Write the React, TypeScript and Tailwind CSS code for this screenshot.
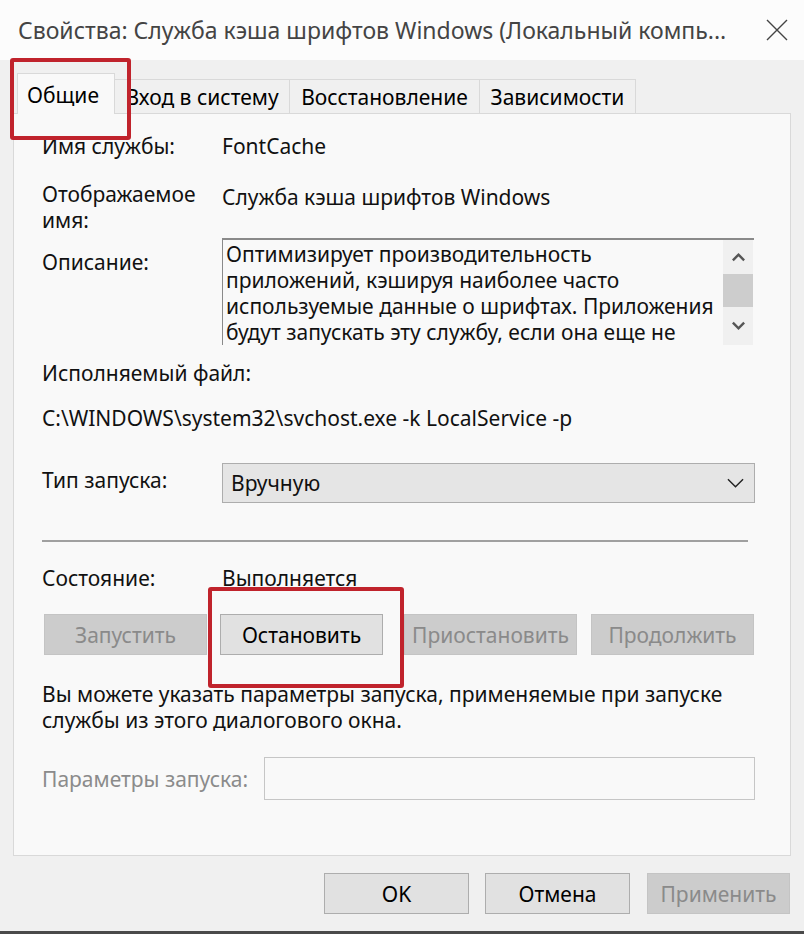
import React from 'react';

const FONT = { fontFamily: '"Noto Sans", "Open Sans", sans-serif' };

function Chevron({ up, className }: { up?: boolean; className?: string }) {
  return (
    <svg viewBox="0 0 16 10" className={className} fill="none" stroke="currentColor" strokeWidth={2.6}>
      {up ? <path d="M2 8.5 L8 2.5 L14 8.5" /> : <path d="M2 1.5 L8 7.5 L14 1.5" />}
    </svg>
  );
}

function Tab({ label, active, w }: { label: string; active?: boolean; w: string }) {
  if (active) {
    return (
      <div className={`${w} h-[41px] -mb-px relative z-10 bg-[#f9f9f9] border border-b-0 border-[#d9d9d9] flex items-start pt-[8px] pl-[9px] text-black`}>
        {label}
      </div>
    );
  }
  return (
    <div className={`${w} h-[34px] bg-[#f0f0f0] border border-b-0 border-l-0 border-[#d9d9d9] flex items-center justify-center text-black whitespace-nowrap`}>
      {label}
    </div>
  );
}

function Btn({ label, w, disabled }: { label: string; w: string; disabled?: boolean }) {
  return (
    <div
      className={`${w} h-[41px] flex items-center justify-center border whitespace-nowrap ${
        disabled ? 'bg-[#cccccc] border-[#c4c4c4] text-[#8a8a8a]' : 'bg-[#e1e1e1] border-[#adadad] text-black'
      }`}
    >
      {label}
    </div>
  );
}

export default function App() {
  return (
    <div className="w-[804px] h-[934px] bg-[#f0f0f0] relative overflow-hidden text-[21px] leading-[26px] text-[#111]" style={FONT}>
      {/* Title bar */}
      <div className="h-[60px] bg-[#fcfcfc] flex items-center pl-[18px] pr-[14px]">
        <div className="flex-1 text-[23px] text-[#444] whitespace-nowrap">Свойства: Служба кэша шрифтов Windows (Локальный компь...</div>
        <svg viewBox="0 0 22 22" className="w-[22px] h-[22px] text-[#444] mr-[2px]" fill="none" stroke="currentColor" strokeWidth={1.4}>
          <path d="M1 1 L21 21 M21 1 L1 21" />
        </svg>
      </div>

      {/* Tabs */}
      <div className="flex items-end pl-[17px] mt-[13px] h-[40px]">
        <Tab label="Общие" active w="w-[98px]" />
        <Tab label="Вход в систему" w="w-[175px]" />
        <Tab label="Восстановление" w="w-[190px]" />
        <Tab label="Зависимости" w="w-[156px]" />
      </div>

      {/* Panel */}
      <div className="mx-[13px] h-[743px] bg-[#f9f9f9] border border-[#d9d9d9] pl-[28px] pr-[35px]">
        <div className="mt-[19px] flex">
          <div className="w-[180px]">Имя службы:</div>
          <div>FontCache</div>
        </div>

        <div className="mt-[22px] flex">
          <div className="w-[180px]">
            Отображаемое
            <br />
            имя:
          </div>
          <div className="pt-[3px]">Служба кэша шрифтов Windows</div>
        </div>

        <div className="mt-[5px] flex">
          <div className="w-[180px] pt-[11px]">Описание:</div>
          <div className="w-[532px] h-[107px] border-t-2 border-l border-[#8a8a8a] flex">
            <div className="flex-1 pl-[3px] pt-px whitespace-nowrap">
              Оптимизирует производительность
              <br />
              приложений, кэшируя наиболее часто
              <br />
              используемые данные о шрифтах. Приложения
              <br />
              будут запускать эту службу, если она еще не
            </div>
            <div className="w-[30px] mr-[1px] bg-[#f0f0f0] flex flex-col items-center">
              <div className="h-[34px] flex items-center justify-center text-[#555]">
                <Chevron up className="w-[15px] h-[10px]" />
              </div>
              <div className="w-full h-[33px] bg-[#cdcdcd]" />
              <div className="flex-1 flex items-center justify-center text-[#555]">
                <Chevron className="w-[15px] h-[10px]" />
              </div>
            </div>
          </div>
        </div>

        <div className="mt-[15px]">Исполняемый файл:</div>
        <div className="mt-[19px] whitespace-nowrap">C:\WINDOWS\system32\svchost.exe -k LocalService -p</div>

        <div className="mt-[32px] flex items-center">
          <div className="w-[180px] -mt-[6px]">Тип запуска:</div>
          <div className="w-[533px] h-[40px] bg-[#e5e5e5] border border-[#adadad] flex items-center pl-[8px] pr-[10px]">
            <div className="flex-1">Вручную</div>
            <svg viewBox="0 0 18 10" className="w-[17px] h-[10px] text-[#222]" fill="none" stroke="currentColor" strokeWidth={1.5}>
              <path d="M1 1 L9 9 L17 1" />
            </svg>
          </div>
        </div>

        <div className="mt-[37px] w-[706px] h-[2px] bg-[#a0a0a0]" />

        <div className="mt-[23px] flex">
          <div className="w-[180px]">Состояние:</div>
          <div>Выполняется</div>
        </div>

        <div className="mt-[23px] flex pl-[2px]">
          <Btn label="Запустить" w="w-[163px]" disabled />
          <div className="ml-[13px]">
            <Btn label="Остановить" w="w-[163px]" />
          </div>
          <div className="ml-[21px]">
            <Btn label="Приостановить" w="w-[173px]" disabled />
          </div>
          <div className="ml-[14px]">
            <Btn label="Продолжить" w="w-[163px]" disabled />
          </div>
        </div>

        <div className="mt-[26px] whitespace-nowrap">
          Вы можете указать параметры запуска, применяемые при запуске
          <br />
          службы из этого диалогового окна.
        </div>

        <div className="mt-[24px] flex items-center">
          <div className="w-[222px] text-[#8b8b8b] whitespace-nowrap">Параметры запуска:</div>
          <div className="w-[491px] h-[43px] border border-[#c6c6c6] bg-[#f9f9f9]" />
        </div>
      </div>

      {/* Footer buttons */}
      <div className="flex justify-end pr-[14px] mt-[17px]">
        <Btn label="OK" w="w-[145px]" />
        <div className="ml-[16px]">
          <Btn label="Отмена" w="w-[145px]" />
        </div>
        <div className="ml-[17px]">
          <Btn label="Применить" w="w-[143px]" disabled />
        </div>
      </div>

      <div className="absolute left-0 right-0 bottom-0 h-[3px] bg-[#4a4a4a]" />

      {/* Annotation boxes */}
      <div className="absolute left-[10px] top-[58px] w-[121px] h-[82px] border-[4px] border-[#c0232c] rounded-[3px] z-20" />
      <div className="absolute left-[208px] top-[587px] w-[196px] h-[101px] border-[4px] border-[#c0232c] rounded-[3px] z-20" />
    </div>
  );
}
